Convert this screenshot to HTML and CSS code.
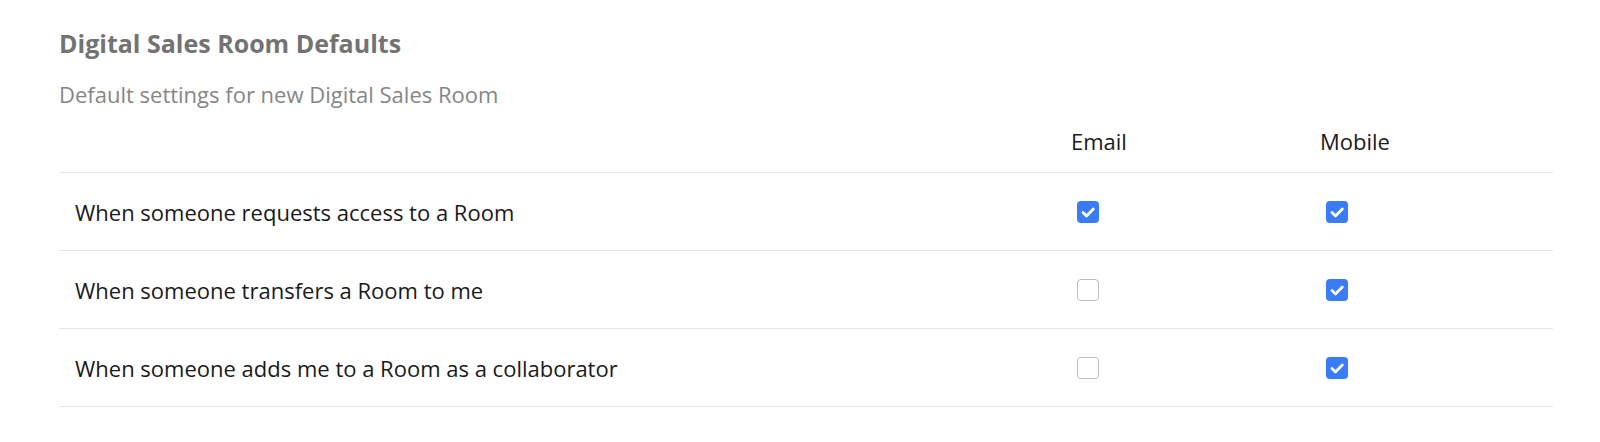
FILE: index.html
```html
<!DOCTYPE html>
<html lang="en">
<head>
<meta charset="utf-8">
<title>Digital Sales Room Defaults</title>
<link rel="stylesheet" href="styles.css">
</head>
<body>
<section class="page">
  <h2 class="title">Digital Sales Room Defaults</h2>
  <p class="subtitle">Default settings for new Digital Sales Room</p>
  <div class="table">
    <div class="row head">
      <div class="cell"></div>
      <div class="cell">Email</div>
      <div class="cell">Mobile</div>
    </div>
    <div class="row">
      <div class="cell label">When someone requests access to a Room</div>
      <div class="cell"><span class="cb checked"><svg viewBox="0 0 22 22"><path d="M6 11.5 L9.5 15 L16.3 8"/></svg></span></div>
      <div class="cell"><span class="cb checked"><svg viewBox="0 0 22 22"><path d="M6 11.5 L9.5 15 L16.3 8"/></svg></span></div>
    </div>
    <div class="row">
      <div class="cell label">When someone transfers a Room to me</div>
      <div class="cell"><span class="cb"></span></div>
      <div class="cell"><span class="cb checked"><svg viewBox="0 0 22 22"><path d="M6 11.5 L9.5 15 L16.3 8"/></svg></span></div>
    </div>
    <div class="row">
      <div class="cell label">When someone adds me to a Room as a collaborator</div>
      <div class="cell"><span class="cb"></span></div>
      <div class="cell"><span class="cb checked"><svg viewBox="0 0 22 22"><path d="M6 11.5 L9.5 15 L16.3 8"/></svg></span></div>
    </div>
  </div>
</section>
</body>
</html>
```
FILE: styles.css
```css
html, body {
  margin: 0;
  padding: 0;
  background: #ffffff;
}

.page {
  padding: 26px 47px 0 59px;
  font-family: "Open Sans", "Noto Sans", sans-serif;
}

.title {
  margin: 0;
  font-size: 25px;
  line-height: 34px;
  font-weight: 700;
  color: #737373;
}

.subtitle {
  margin: 19px 0 0;
  font-size: 22px;
  line-height: 30px;
  color: #868686;
}

.table {
  margin-top: 17px;
}

.row {
  display: grid;
  grid-template-columns: 996px 249px 1fr;
  height: 77px;
  align-items: center;
  border-bottom: 1px solid #e6e6e6;
}

.row.head {
  height: auto;
  align-items: start;
  padding-bottom: 16px;
}

.cell {
  padding-left: 16px;
  font-size: 22px;
  line-height: 30px;
  color: #1a1a1a;
  display: flex;
  align-items: center;
}

.cb {
  box-sizing: border-box;
  width: 22px;
  height: 22px;
  margin-left: 6px;
  border: 1.5px solid #bdbdbd;
  border-radius: 4px;
  background: #ffffff;
  display: inline-flex;
}

.cb.checked {
  border: none;
  background: #3a7cf6;
}

.cb svg {
  width: 22px;
  height: 22px;
}

.cb svg path {
  fill: none;
  stroke: #ffffff;
  stroke-width: 2.8;
  stroke-linecap: round;
  stroke-linejoin: round;
}
```
